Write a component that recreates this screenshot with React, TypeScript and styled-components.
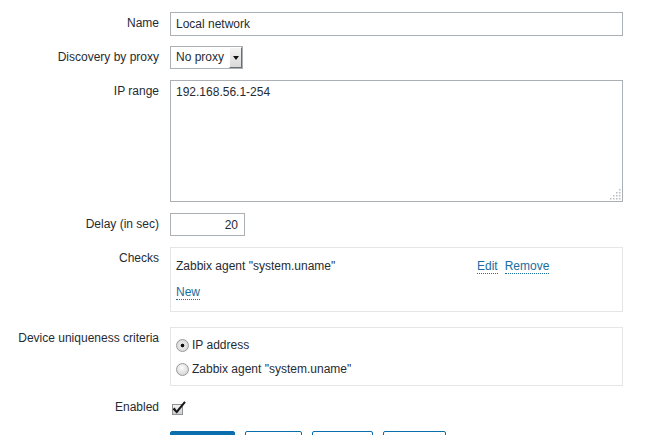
import React from "react";
import styled, { createGlobalStyle } from "styled-components";

const Global = createGlobalStyle`
  html, body { margin: 0; padding: 0; background: #fff; overflow: hidden; }
  body {
    font-family: "Liberation Sans", Arial, sans-serif;
    font-size: 12px;
    color: #1f2c33;
  }
`;

const Form = styled.div`
  display: flex;
  flex-direction: column;
  padding-top: 12px;
`;

const Row = styled.div<{ $mb?: number }>`
  display: grid;
  grid-template-columns: 159px 453px;
  column-gap: 11px;
  align-items: start;
  margin-bottom: ${(p) => p.$mb ?? 11}px;
`;

const Label = styled.div`
  text-align: right;
  line-height: 23px;
  white-space: nowrap;
`;

const TextInput = styled.input<{ $w?: number; $h?: number; $align?: string }>`
  box-sizing: border-box;
  display: block;
  width: ${(p) => p.$w ?? 453}px;
  height: ${(p) => p.$h ?? 23}px;
  margin: 0;
  padding: 0 6px 0 5px;
  border: 1px solid #aab0b3;
  border-radius: 0;
  background: #fff;
  font: inherit;
  color: inherit;
  text-align: ${(p) => p.$align ?? "left"};
  outline: none;
`;

const Select = styled.div`
  box-sizing: border-box;
  width: 73px;
  height: 23px;
  display: flex;
  align-items: stretch;
  padding-left: 5px;
  border: 1px solid #aab0b3;
  background: #fff;
`;

const SelectText = styled.span`
  flex: 1;
  line-height: 21px;
  white-space: nowrap;
`;

const SelectArrow = styled.span`
  box-sizing: border-box;
  width: 13px;
  display: flex;
  align-items: center;
  justify-content: center;
  background: linear-gradient(#f4f4f4, #d9d9d9);
  border-top: 1px solid #fff;
  border-left: 1px solid #fdfdfd;
  border-right: 1px solid #6f6f6f;
  border-bottom: 1px solid #6f6f6f;

  &::after {
    content: "";
    width: 0;
    height: 0;
    border-left: 3px solid transparent;
    border-right: 3px solid transparent;
    border-top: 4px solid #111;
  }
`;

const AreaWrap = styled.div`
  position: relative;
  width: 453px;
  height: 122px;
`;

const Area = styled.textarea`
  box-sizing: border-box;
  display: block;
  width: 100%;
  height: 100%;
  margin: 0;
  padding: 4px 5px;
  border: 1px solid #aab0b3;
  font: inherit;
  line-height: 14px;
  color: inherit;
  resize: none;
  outline: none;
  overflow: hidden;
`;

const Grip = styled.svg`
  position: absolute;
  right: 2px;
  bottom: 2px;
`;

const Panel = styled.div<{ $pt: number; $pb: number }>`
  box-sizing: border-box;
  width: 453px;
  border: 1px solid #e4e6e7;
  padding: ${(p) => p.$pt}px 5px ${(p) => p.$pb}px;
`;

const CheckRow = styled.div`
  display: grid;
  grid-template-columns: 301px auto;
  height: 26px;
  align-items: center;
`;

const Actions = styled.div`
  display: flex;
  gap: 7px;
`;

const Link = styled.a`
  color: #1b6d9e;
  text-decoration: none;
  border-bottom: 1px dotted #1b6d9e;
  cursor: pointer;
  justify-self: start;
`;

const RadioRow = styled.label`
  display: flex;
  align-items: center;
  height: 24px;
`;

const Radio = styled.span<{ $on?: boolean }>`
  box-sizing: border-box;
  width: 13px;
  height: 13px;
  margin-right: 3px;
  border-radius: 50%;
  border: 1px solid #979a9c;
  background: ${(p) =>
    p.$on
      ? "radial-gradient(circle at 50% 50%, #111 0 1.6px, #e9e9e9 2.2px, #cfcfcf 100%)"
      : "radial-gradient(circle at 45% 35%, #fdfdfd 0, #e6e6e6 45%, #c9c9c9 100%)"};
`;

const CheckWrap = styled.div`
  height: 23px;
  display: flex;
  align-items: center;
`;

const Buttons = styled.div`
  display: flex;
  gap: 10px;
`;

const Btn = styled.button<{ $primary?: boolean }>`
  height: 24px;
  margin: 0;
  padding: 0 12px;
  border: 1px solid #0b6ead;
  border-radius: 2px;
  background: ${(p) => (p.$primary ? "#0b6ead" : "#fff")};
  color: ${(p) => (p.$primary ? "#fff" : "#0b6ead")};
  font: inherit;
  cursor: pointer;
`;

const gripDots: [number, number][] = [];
for (let r = 0; r < 4; r++) {
  for (let c = 3 - r; c < 4; c++) {
    gripDots.push([c * 3, r * 3]);
  }
}

export default function App() {
  return (
    <>
      <Global />
      <Form>
        <Row $mb={10}>
          <Label>Name</Label>
          <TextInput $h={24} value="Local network" readOnly />
        </Row>
        <Row>
          <Label>Discovery by proxy</Label>
          <Select>
            <SelectText>No proxy</SelectText>
            <SelectArrow />
          </Select>
        </Row>
        <Row>
          <Label>IP range</Label>
          <AreaWrap>
            <Area value="192.168.56.1-254" readOnly />
            <Grip width="11" height="11" viewBox="0 0 11 11">
              {gripDots.map(([x, y], i) => (
                <rect key={i} x={x} y={y} width="1.5" height="1.5" fill="#b9bcbe" />
              ))}
            </Grip>
          </AreaWrap>
        </Row>
        <Row>
          <Label>Delay (in sec)</Label>
          <TextInput $w={75} $align="right" value="20" readOnly />
        </Row>
        <Row $mb={15}>
          <Label>Checks</Label>
          <Panel $pt={5} $pb={6}>
            <CheckRow>
              <span>Zabbix agent "system.uname"</span>
              <Actions>
                <Link>Edit</Link>
                <Link>Remove</Link>
              </Actions>
            </CheckRow>
            <CheckRow>
              <Link>New</Link>
            </CheckRow>
          </Panel>
        </Row>
        <Row $mb={10}>
          <Label>Device uniqueness criteria</Label>
          <Panel $pt={5} $pb={4}>
            <RadioRow>
              <Radio $on />
              IP address
            </RadioRow>
            <RadioRow>
              <Radio />
              Zabbix agent "system.uname"
            </RadioRow>
          </Panel>
        </Row>
        <Row $mb={12}>
          <Label>Enabled</Label>
          <CheckWrap>
            <svg width="17" height="17" viewBox="0 0 17 17">
              <defs>
                <linearGradient id="cbg" x1="0" y1="0" x2="0" y2="1">
                  <stop offset="0" stopColor="#f6f6f6" />
                  <stop offset="1" stopColor="#cdcdcd" />
                </linearGradient>
              </defs>
              <rect x="2.5" y="5.5" width="10" height="10" fill="url(#cbg)" stroke="#8f9395" />
              <path d="M2.6 10.2 L4.6 8.6 L6.6 11.4 L14.2 2.2 L15.8 3.4 L6.8 14.6 Z" fill="#151515" />
            </svg>
          </CheckWrap>
        </Row>
        <Row>
          <span />
          <Buttons>
            <Btn $primary>Update</Btn>
            <Btn>Clone</Btn>
            <Btn>Delete</Btn>
            <Btn>Cancel</Btn>
          </Buttons>
        </Row>
      </Form>
    </>
  );
}
